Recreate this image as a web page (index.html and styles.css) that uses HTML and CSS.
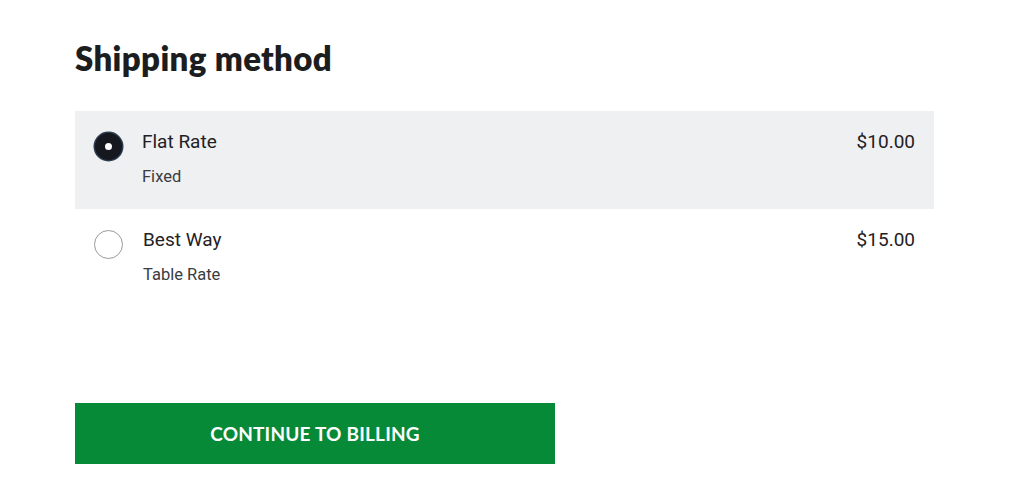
FILE: index.html
```html
<!DOCTYPE html>
<html>
<head>
<meta charset="utf-8">
<link rel="stylesheet" href="styles.css">
</head>
<body>
<main class="page">
  <h1 class="title">Shipping method</h1>
  <div class="methods">
    <label class="method selected">
      <span class="radio"></span>
      <span class="info">
        <span class="name">Flat Rate</span>
        <span class="sub">Fixed</span>
      </span>
      <span class="price">$10.00</span>
    </label>
    <label class="method">
      <span class="radio"></span>
      <span class="info">
        <span class="name">Best Way</span>
        <span class="sub">Table Rate</span>
      </span>
      <span class="price">$15.00</span>
    </label>
  </div>
  <button class="continue">CONTINUE TO BILLING</button>
</main>
</body>
</html>
```
FILE: styles.css
```css
html, body {
  margin: 0;
  padding: 0;
  background: #fff;
}
.page {
  padding: 38px 0 0 75px;
  width: 859px;
  font-family: Roboto, "Liberation Sans", sans-serif;
  color: #1f2124;
}
.title {
  margin: 0;
  font-family: Lato, "Liberation Sans", sans-serif;
  font-weight: 800;
  font-size: 33px;
  line-height: 40px;
  color: #1c1d1f;
  letter-spacing: 0.35px;
}
.methods {
  margin-top: 33px;
  display: flex;
  flex-direction: column;
}
.method {
  display: flex;
  align-items: flex-start;
  padding: 19px 19px 21px 19px;
  height: 58px;
}
.method.selected {
  background: #eff0f2;
}
.radio {
  box-sizing: border-box;
  width: 29px;
  height: 29px;
  margin-top: 2px;
  border-radius: 50%;
  border: 1.5px solid #9a9a9a;
  background: #fff;
  flex: none;
}
.selected .radio {
  border: 10.5px solid #15191f;
  background: #fff;
  box-shadow: 0 0 0 1.5px #2b3a4c;
  width: 27px;
  height: 27px;
  margin-left: 1px;
  margin-top: 3px;
}
.info {
  display: flex;
  flex-direction: column;
  margin-left: 20px;
  flex: 1;
}
.name {
  font-size: 19px;
  line-height: 24px;
  color: #1f2124;
}
.sub {
  margin-top: 11.5px;
  font-size: 16.5px;
  line-height: 22px;
  color: #3a3c40;
}
.price {
  font-size: 19px;
  line-height: 24px;
  color: #1f2124;
}
.continue {
  display: block;
  margin-top: 96px;
  width: 480px;
  height: 61px;
  border: none;
  background: #068a38;
  color: #fff;
  font-family: Lato, "Liberation Sans", sans-serif;
  font-weight: 700;
  font-size: 19px;
  letter-spacing: 0.2px;
  padding: 0;
  cursor: pointer;
}
```
